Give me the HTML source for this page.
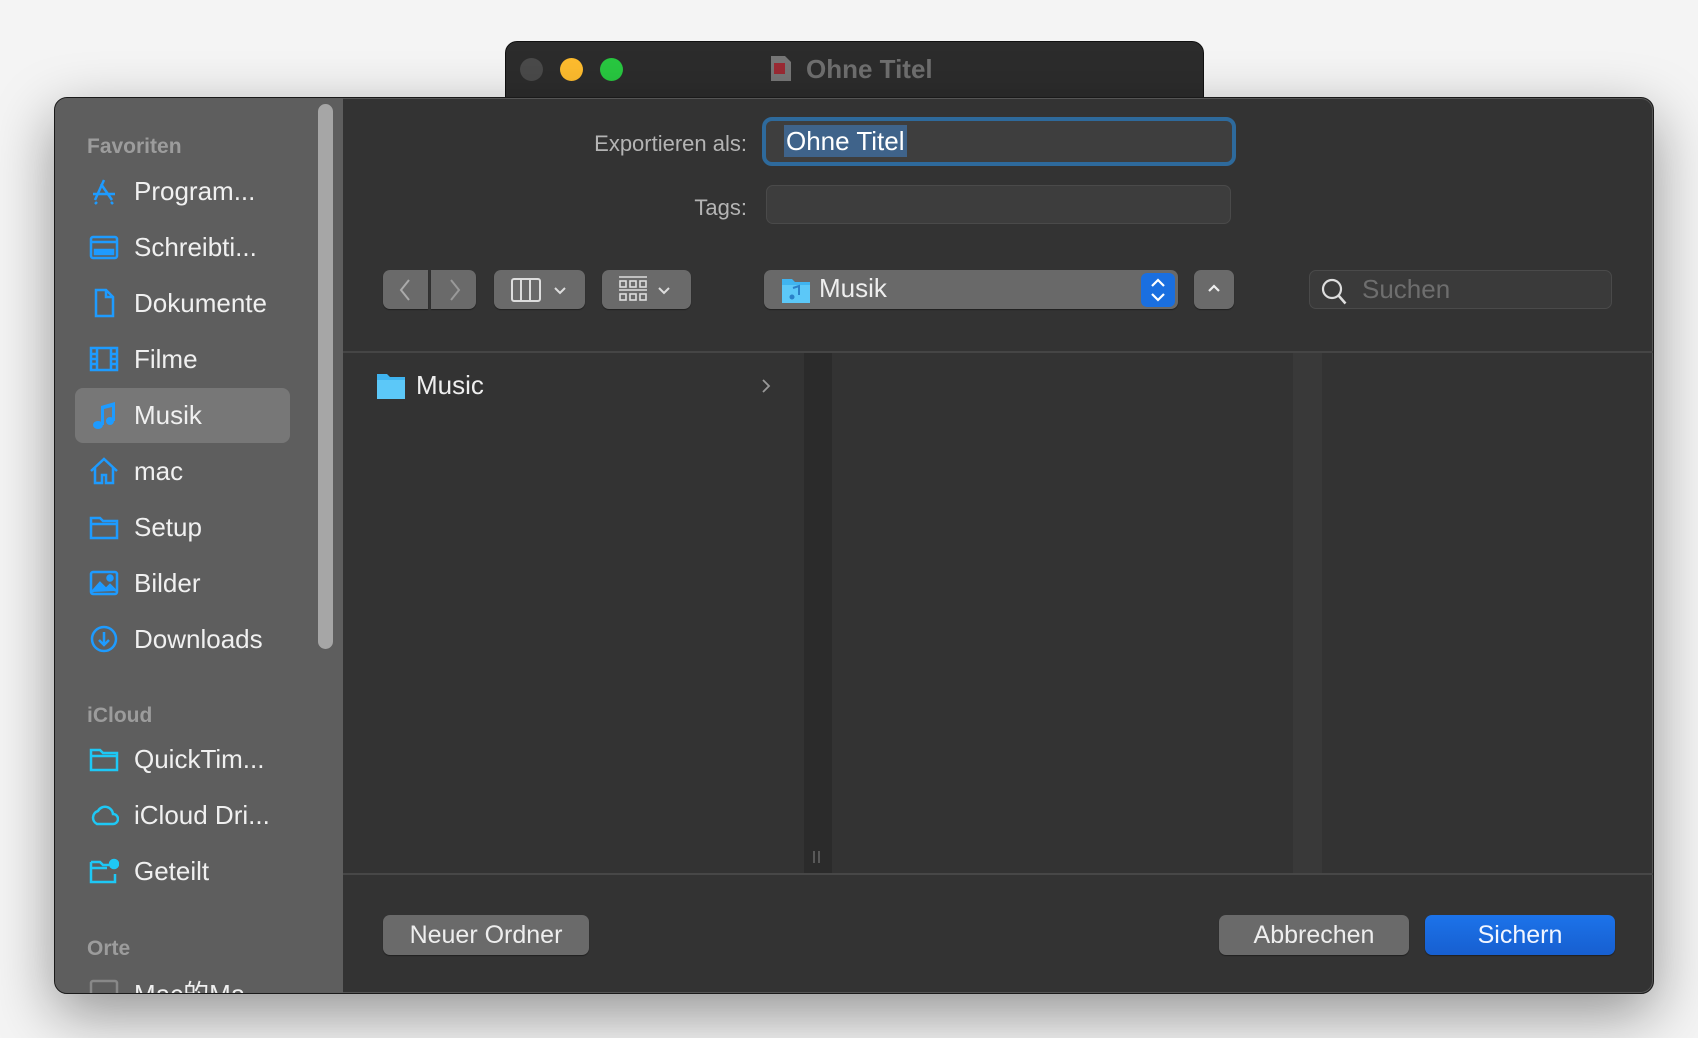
<!DOCTYPE html>
<html><head><meta charset="utf-8"><style>
*{box-sizing:border-box;margin:0;padding:0}
body{width:1698px;height:1038px;background:#f4f4f4;font-family:"Liberation Sans","Noto Sans CJK SC",sans-serif;position:relative;overflow:hidden}
.abs{position:absolute}
.back{left:505px;top:41px;width:699px;height:80px;background:#2c2c2c;border:1px solid #111;border-radius:12px 12px 0 0}
.tl{width:23px;height:23px;border-radius:50%;top:58px}
.win{left:54px;top:97px;width:1600px;height:897px;background:#333;border:1px solid #1a1a1a;border-radius:13px;overflow:hidden;box-shadow:0 20px 60px rgba(0,0,0,.4),0 0 0 1px #555 inset}
.side{left:0;top:0;width:288px;height:897px;background:#5e5e5e}
.hdr{left:32px;font-size:21px;font-weight:bold;color:#9c9c9c}
.it{left:34px;height:40px;font-size:26px;color:#f0f0f0;display:flex;align-items:center}
.it svg{width:30px;height:30px;margin-right:15px;flex:none}
.lbl{font-size:22px;color:#b4b4b4;text-align:right}
.btn{background:#6a6a6a;border-radius:7px;box-shadow:0 1px 1px rgba(0,0,0,.4)}
.bt{color:#eee;font-size:25px;display:flex;align-items:center;justify-content:center}
</style></head><body>
<div class="abs back"></div>
<div class="abs tl" style="left:520px;background:#4a4a4a"></div>
<div class="abs tl" style="left:560px;background:#febc2e"></div>
<div class="abs tl" style="left:600px;background:#28c840"></div>
<svg class="abs" style="left:770px;top:55px" width="22" height="27"><path d="M1 1h14l6 6v19H1z" fill="#777"/><rect x="4" y="8" width="11" height="11" fill="#9b2a33"/></svg>
<div class="abs" style="left:806px;top:54px;font-size:26px;font-weight:bold;color:#6f6f6f">Ohne Titel</div>

<div class="abs win">
 <div class="abs side">
  <div class="abs" style="left:263px;top:6px;width:15px;height:545px;background:#a6a6a6;border-radius:8px"></div>
  <div class="abs hdr" style="top:37px">Favoriten</div>
  <div class="abs" style="left:20px;top:290px;width:215px;height:55px;background:#777;border-radius:8px"></div>
  <div class="abs it" style="top:73px"><svg viewBox="0 0 30 30" fill="none" stroke="#1e9bff" stroke-width="2.5"><path d="M15 4L6 24M12 8l11 16M4 18h22M8 26l-2 2M22 26l2 2"/></svg>Program...</div>
  <div class="abs it" style="top:129px"><svg viewBox="0 0 30 30" fill="none" stroke="#1e9bff" stroke-width="2.5"><rect x="2" y="5" width="26" height="21" rx="2"/><path d="M2 10h26"/><rect x="6" y="18" width="18" height="4" fill="#1e9bff"/></svg>Schreibti...</div>
  <div class="abs it" style="top:185px"><svg viewBox="0 0 30 30" fill="none" stroke="#1e9bff" stroke-width="2.5"><path d="M7 2h10l7 7v19H7z M17 2v7h7"/></svg>Dokumente</div>
  <div class="abs it" style="top:241px"><svg viewBox="0 0 30 30" fill="none" stroke="#1e9bff" stroke-width="2.5"><rect x="2" y="4" width="26" height="22"/><path d="M8 4v22M22 4v22M2 10h6M2 15h6M2 20h6M22 10h6M22 15h6M22 20h6"/></svg>Filme</div>
  <div class="abs it" style="top:297px"><svg viewBox="0 0 30 30" fill="#1e9bff"><path d="M12 6l14-4v19h-3V7l-8 2v16h-3z"/><ellipse cx="9" cy="25" rx="5" ry="4"/><ellipse cx="21" cy="21" rx="4" ry="4"/></svg>Musik</div>
  <div class="abs it" style="top:353px"><svg viewBox="0 0 30 30" fill="none" stroke="#1e9bff" stroke-width="2.5"><path d="M2 15L15 3l13 12M6 12v15h7v-8h4v8h7V12"/></svg>mac</div>
  <div class="abs it" style="top:409px"><svg viewBox="0 0 30 30" fill="none" stroke="#1e9bff" stroke-width="2.5"><path d="M2 6h9l3 3h14v17H2zM2 12h26"/></svg>Setup</div>
  <div class="abs it" style="top:465px"><svg viewBox="0 0 30 30" fill="none" stroke="#1e9bff" stroke-width="2.5"><rect x="2" y="4" width="26" height="22" rx="2"/><path d="M3 24l8-9 6 6 4-4 6 6" fill="#1e9bff"/><circle cx="21" cy="10" r="2.5" fill="#1e9bff"/></svg>Bilder</div>
  <div class="abs it" style="top:521px"><svg viewBox="0 0 30 30" fill="none" stroke="#1e9bff" stroke-width="2.5"><circle cx="15" cy="15" r="12"/><path d="M15 8v13M10 16l5 5 5-5"/></svg>Downloads</div>
  <div class="abs hdr" style="top:606px">iCloud</div>
  <div class="abs it" style="top:641px"><svg viewBox="0 0 30 30" fill="none" stroke="#1ec8f5" stroke-width="2.5"><path d="M2 6h9l3 3h14v17H2zM2 12h26"/></svg>QuickTim...</div>
  <div class="abs it" style="top:697px"><svg viewBox="0 0 30 30" fill="none" stroke="#1ec8f5" stroke-width="2.5"><path d="M8 24h16a5 5 0 0 0 0-10 8 8 0 0 0-15-3A7 7 0 0 0 8 24z"/></svg>iCloud Dri...</div>
  <div class="abs it" style="top:753px"><svg viewBox="0 0 30 30" fill="none" stroke="#1ec8f5" stroke-width="2.5"><path d="M2 6h9l3 3h6M2 12h16M2 6v20h24v-8"/><circle cx="25" cy="8" r="4" fill="#1ec8f5"/></svg>Geteilt</div>
  <div class="abs hdr" style="top:839px">Orte</div>
  <div class="abs it" style="top:874px"><svg viewBox="0 0 30 30" fill="none" stroke="#888" stroke-width="2.5"><rect x="2" y="4" width="26" height="22" rx="2"/></svg>Mac的Ma</div>
 </div>

 <div class="abs lbl" style="left:400px;top:33px;width:292px">Exportieren als:</div>
 <div class="abs" style="left:707px;top:19px;width:474px;height:49px;border:4px solid #2e6a9c;border-radius:10px;background:#3e3e3e"></div>
 <div class="abs" style="left:729px;top:27px;height:32px;padding:0 2px;background:#3f638a;color:#fff;font-size:26px;line-height:32px">Ohne Titel</div>
 <div class="abs lbl" style="left:400px;top:97px;width:292px">Tags:</div>
 <div class="abs" style="left:711px;top:87px;width:465px;height:39px;border:1px solid #4a4a4a;border-radius:7px;background:#3d3d3d"></div>

 <div class="abs btn" style="left:328px;top:172px;width:45px;height:39px;border-radius:7px 0 0 7px"></div>
 <svg class="abs" style="left:342px;top:180px" width="16" height="24"><path d="M12 2L4 12l8 10" stroke="#aaa" stroke-width="2" fill="none"/></svg>
 <div class="abs btn" style="left:376px;top:172px;width:45px;height:39px;border-radius:0 7px 7px 0"></div>
 <svg class="abs" style="left:392px;top:180px" width="16" height="24"><path d="M4 2l8 10-8 10" stroke="#999" stroke-width="2" fill="none"/></svg>
 <div class="abs btn" style="left:439px;top:172px;width:91px;height:39px"></div>
 <svg class="abs" style="left:455px;top:178px" width="66" height="28"><rect x="2" y="3" width="28" height="22" rx="2" stroke="#ddd" stroke-width="2" fill="none"/><path d="M11 3v22M20 3v22M45 12l5 5 5-5" stroke="#ddd" stroke-width="2" fill="none"/></svg>
 <div class="abs btn" style="left:547px;top:172px;width:89px;height:39px"></div>
 <svg class="abs" style="left:562px;top:177px" width="66" height="30"><g fill="none" stroke="#ddd" stroke-width="1.6"><path d="M2 2h28M2 15h28"/><rect x="3" y="6" width="6" height="6"/><rect x="13" y="6" width="6" height="6"/><rect x="23" y="6" width="6" height="6"/><rect x="3" y="19" width="6" height="6"/><rect x="13" y="19" width="6" height="6"/><rect x="23" y="19" width="6" height="6"/><path d="M42 13l5 5 5-5" stroke-width="2"/></g></svg>
 <div class="abs btn" style="left:709px;top:172px;width:414px;height:39px;background:#696969"></div>
 <svg class="abs" style="left:726px;top:178px" width="30" height="28"><path d="M1 3h10l3 3h15v21H1z" fill="#3fb4f0"/><path d="M1 9h28v18H1z" fill="#5cc8f8"/><path d="M12 12l6-2v9" stroke="#2a80c8" stroke-width="2" fill="none"/><circle cx="11" cy="21" r="2.5" fill="#2a80c8"/></svg>
 <div class="abs" style="left:764px;top:173px;font-size:26px;color:#eee;line-height:34px">Musik</div>
 <div class="abs" style="left:1086px;top:175px;width:34px;height:34px;background:#1a6fe0;border-radius:6px"></div>
 <svg class="abs" style="left:1094px;top:179px" width="18" height="26"><path d="M3 9l6-6 6 6M3 17l6 6 6-6" stroke="#fff" stroke-width="2.2" fill="none"/></svg>
 <div class="abs btn" style="left:1139px;top:172px;width:40px;height:39px"></div>
 <svg class="abs" style="left:1151px;top:183px" width="16" height="14"><path d="M3 10l5-5 5 5" stroke="#eee" stroke-width="2.2" fill="none"/></svg>
 <div class="abs" style="left:1254px;top:172px;width:303px;height:39px;border:1px solid #4a4a4a;border-radius:7px;background:#3a3a3a"></div>
 <svg class="abs" style="left:1265px;top:179px" width="30" height="30"><circle cx="12" cy="12" r="9" stroke="#ddd" stroke-width="2.2" fill="none"/><path d="M18.5 18.5l7 8" stroke="#ddd" stroke-width="2.5"/></svg>
 <div class="abs" style="left:1307px;top:174px;font-size:26px;color:#6e6e6e;line-height:34px">Suchen</div>

 <div class="abs" style="left:288px;top:253px;width:1312px;height:2px;background:#454545"></div>
 <div class="abs" style="left:749px;top:255px;width:28px;height:521px;background:#2b2b2b"></div>
 <svg class="abs" style="left:756px;top:752px" width="12" height="14"><path d="M3 1v12M8 1v12" stroke="#777" stroke-width="1.2"/></svg>
 <div class="abs" style="left:1238px;top:255px;width:29px;height:521px;background:#393939"></div>
 <svg class="abs" style="left:321px;top:274px" width="30" height="28"><path d="M1 2h10l3 3h15v22H1z" fill="#3fb4f0"/><path d="M1 8h28v19H1z" fill="#5cc8f8"/></svg>
 <div class="abs" style="left:361px;top:270px;font-size:26px;color:#eee;line-height:34px">Music</div>
 <svg class="abs" style="left:705px;top:279px" width="12" height="18"><path d="M3 3l6 6-6 6" stroke="#999" stroke-width="1.8" fill="none"/></svg>
 <div class="abs" style="left:288px;top:775px;width:1312px;height:2px;background:#474747"></div>

 <div class="abs btn bt" style="left:328px;top:817px;width:206px;height:40px">Neuer Ordner</div>
 <div class="abs btn bt" style="left:1164px;top:817px;width:190px;height:40px">Abbrechen</div>
 <div class="abs btn bt" style="left:1370px;top:817px;width:190px;height:40px;background:linear-gradient(#1c73ea,#175fd0);color:#f2f6ff">Sichern</div>
</div>
</body></html>
